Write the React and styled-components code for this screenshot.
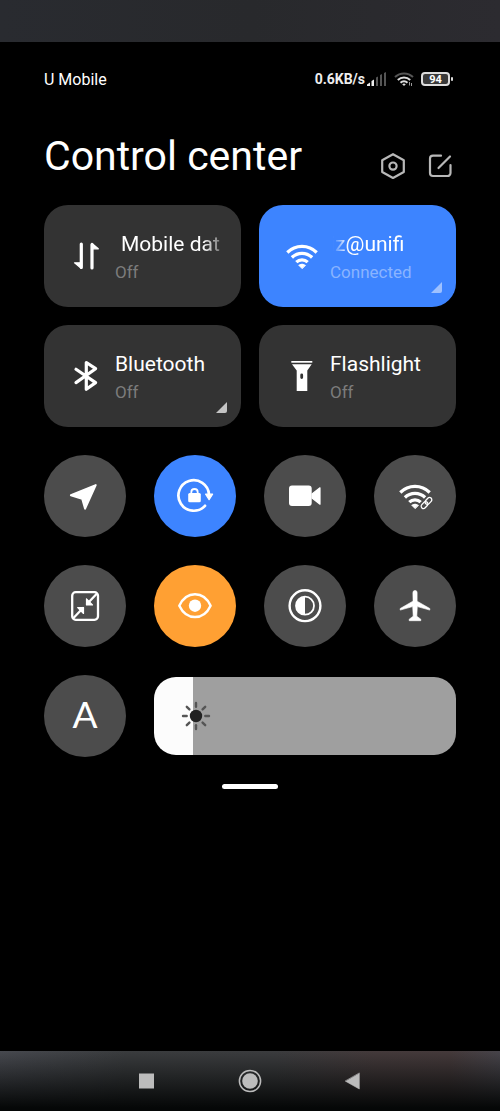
import React, { useState } from "react";
import styled, { createGlobalStyle } from "styled-components";

const GlobalStyle = createGlobalStyle`
  * {
    box-sizing: border-box;
  }
  body {
    margin: 0;
    background: #000;
    color: #fff;
    font-family: Roboto, "Liberation Sans", sans-serif;
  }
  button {
    margin: 0;
    padding: 0;
    border: none;
    background: none;
    color: inherit;
    font: inherit;
    cursor: pointer;
  }
`;

const Screen = styled.div`
  display: flex;
  flex-direction: column;
  min-height: 100vh;
`;

const TopStrip = styled.div`
  height: 42px;
  background: linear-gradient(90deg, #292b30, #28292c 50%, #2c2b30);
`;

const Panel = styled.main`
  flex: 1;
  display: flex;
  flex-direction: column;
  padding: 26px 44px 40px;
`;

const StatusBar = styled.div`
  display: flex;
  align-items: center;
  justify-content: space-between;
  height: 22px;
  font-size: 16px;
`;

const StatusIcons = styled.div`
  display: flex;
  align-items: center;
  gap: 7px;
  padding-right: 3px;
`;

const Speed = styled.span`
  display: flex;
  align-items: center;
  gap: 2px;
  font-size: 14px;
  font-weight: 700;
  color: #eee;
`;

const Battery = styled.div`
  display: flex;
  align-items: center;
  gap: 1px;
  &::after {
    content: "";
    width: 2px;
    height: 4px;
    background: #ddd;
    border-radius: 1px;
  }
`;

const BatteryLevel = styled.span`
  width: 29px;
  height: 14px;
  border: 2px solid #ddd;
  border-radius: 4px;
  background: #3a3a3a;
  font-size: 11px;
  font-weight: 700;
  line-height: 11px;
  text-align: center;
`;

const Header = styled.header`
  display: flex;
  align-items: flex-end;
  justify-content: space-between;
  margin: 41px 0 24px;
`;

const Title = styled.h1`
  margin: 0;
  font-size: 41px;
  font-weight: 400;
  line-height: 50px;
`;

const HeaderActions = styled.div`
  display: flex;
  gap: 18px;
`;

const IconButton = styled.button`
  width: 30px;
  height: 30px;
  color: #b8b8b8;
  svg {
    display: block;
  }
`;

const TileGrid = styled.div`
  display: grid;
  grid-template-columns: 1fr 1fr;
  gap: 18px;
`;

const Tile = styled.button`
  position: relative;
  display: flex;
  align-items: center;
  gap: 8px;
  min-width: 0;
  height: 102px;
  padding: 0 20px 0 23px;
  border-radius: 24px;
  background: ${(props) => (props.$active ? "#3d84ff" : "#333")};
  text-align: left;
  svg {
    flex-shrink: 0;
  }
`;

const TileText = styled.span`
  flex: 1;
  min-width: 0;
  padding-top: 4px;
`;

const fades = {
  right: "linear-gradient(90deg, #000 88px, transparent 114px)",
  left: "linear-gradient(90deg, transparent 3px, #000 18px)",
};

const TileName = styled.span`
  display: block;
  padding-left: ${(props) => (props.$fade === "right" ? "6px" : "0")};
  font-size: 21px;
  line-height: 28px;
  white-space: nowrap;
  mask-image: ${(props) => fades[props.$fade] || "none"};
`;

const TileState = styled.span`
  display: block;
  font-size: 17px;
  line-height: 28px;
  color: ${(props) => (props.$active ? "#8ab4ff" : "#7c7c7c")};
`;

const Corner = styled.span`
  position: absolute;
  right: 14px;
  bottom: 14px;
  width: 11px;
  height: 11px;
  border-bottom-right-radius: 2px;
  background: ${(props) => (props.$active ? "#9ec1ff" : "#c4c4c4")};
  clip-path: polygon(100% 0, 100% 100%, 0 100%);
`;

const ToggleGrid = styled.div`
  display: grid;
  grid-template-columns: repeat(4, 82px);
  justify-content: space-between;
  gap: 28px 0;
  margin: 28px 0;
`;

const colors = { blue: "#3d84ff", orange: "#ffa033" };

const Toggle = styled.button`
  display: flex;
  flex-shrink: 0;
  align-items: center;
  justify-content: center;
  width: 82px;
  height: 82px;
  border-radius: 50%;
  background: ${(props) => colors[props.$color] || "#4c4c4c"};
`;

const AutoLetter = styled.span`
  padding-bottom: 4px;
  font-family: Lato, sans-serif;
  font-size: 37px;
  line-height: 40px;
`;

const BrightnessRow = styled.div`
  display: flex;
  align-items: center;
  gap: 28px;
`;

const Brightness = styled.label`
  position: relative;
  flex: 1;
  display: flex;
  height: 78px;
  svg {
    position: absolute;
    top: 19px;
    left: 22px;
    pointer-events: none;
  }
`;

const Range = styled.input`
  appearance: none;
  width: 100%;
  height: 100%;
  margin: 0;
  border-radius: 22px;
  background: linear-gradient(90deg, #fcfcfc var(--level), #9f9f9f var(--level));
  cursor: pointer;
  &::-webkit-slider-thumb {
    appearance: none;
    width: 2px;
    height: 78px;
    background: transparent;
  }
`;

const Handle = styled.button`
  align-self: center;
  width: 56px;
  height: 5px;
  margin-top: 27px;
  border-radius: 3px;
  background: #fff;
`;

const NavBar = styled.nav`
  display: flex;
  align-items: center;
  justify-content: center;
  gap: 63px;
  height: 60px;
  background: linear-gradient(180deg, transparent, #050707 95%),
    linear-gradient(90deg, #47494f, #3a3c3e 25%, #3b3c3e 55%, #443a3b 75%, #453a3b 90%, #47444a);
`;

const NavButton = styled.button`
  width: 40px;
  height: 40px;
  color: #bcbcbc;
`;

function Icon({ size = 40, children }) {
  return (
    <svg
      width={size}
      height={size}
      viewBox={`0 0 ${size} ${size}`}
      fill="none"
      stroke="currentColor"
      strokeLinecap="round"
      strokeLinejoin="round"
      aria-hidden="true"
    >
      {children}
    </svg>
  );
}

const DataIcon = () => (
  <Icon>
    <path d="M14.3 8v23.5M25 8.500v23.500" strokeWidth="3.200" />
    <path d="M14.500 32.500 7.500 26.800h7zM24.800 7.300l6.500 5.500h-6.500z" fill="currentColor" strokeWidth="1.200" />
  </Icon>
);

const WifiArcs = () => (
  <>
    <path d="M5.300 16.500a20.800 20.800 0 0 1 29.400 0M9.900 21.500a14.300 14.300 0 0 1 20.200 0M14.300 26.200a8.100 8.100 0 0 1 11.400 0" strokeWidth="3.200" strokeLinecap="butt" />
    <path d="M20 32.500l-3.300-3.300q3.300-2.300 6.600 0z" fill="currentColor" strokeWidth="0.800" />
  </>
);

const WifiIcon = () => (
  <Icon>
    <WifiArcs />
  </Icon>
);

const BluetoothIcon = () => (
  <Icon>
    <path d="M9 13.300 28.600 26.600 19.300 33.200V6.500l9.300 6.200L9 26.600" strokeWidth="3.200" />
  </Icon>
);

const FlashlightIcon = () => (
  <Icon>
    <path d="M9.300 5h21v1.700h-21z" fill="currentColor" stroke="none" />
    <path
      d="M10 8.300h19.700L25.300 14.500V35H14.700V14.500zM19.700 17.500a1.400 1.400 0 0 0-1.400 1.400v2.700a1.400 1.400 0 0 0 2.800 0v-2.700a1.400 1.400 0 0 0-1.400-1.400z"
      fill="currentColor"
      fillRule="evenodd"
      stroke="none"
    />
  </Icon>
);

const LocationIcon = () => (
  <Icon>
    <path d="M30.700 9.100 20.100 32.600 17.200 22.700 5.900 19.200z" fill="currentColor" strokeWidth="2" />
  </Icon>
);

const RotationLockIcon = () => (
  <Icon>
    <path d="M34 18.500A15.300 15.300 0 1 0 30 29.800" strokeWidth="2.700" />
    <path d="M30.600 18.200h7l-3.500 5.500z" fill="currentColor" strokeWidth="1.200" />
    <rect x="13.200" y="17" width="12.600" height="9.300" rx="1.500" fill="currentColor" stroke="none" />
    <path d="M16.300 17.500v-1.300a3.200 3.200 0 0 1 6.400 0v1.300" strokeWidth="1.800" />
  </Icon>
);

const VideoIcon = () => (
  <Icon>
    <rect x="4" y="9.500" width="22.700" height="20.500" rx="3" fill="currentColor" stroke="none" />
    <path d="M27 18 35 11.800v16.400L27 22z" fill="currentColor" strokeWidth="1.200" />
  </Icon>
);

const WifiLinkIcon = () => (
  <Icon>
    <WifiArcs />
    <g transform="translate(31.500 27) rotate(-47)">
      <rect x="-8.500" y="-4" width="17" height="8" rx="4" fill="#4c4c4c" stroke="none" />
      <rect x="-6.700" y="-2.300" width="7.700" height="4.600" rx="2.300" strokeWidth="1.300" />
      <rect x="-1" y="-2.300" width="7.700" height="4.600" rx="2.300" strokeWidth="1.300" />
    </g>
  </Icon>
);

const FloatingWindowIcon = () => (
  <Icon>
    <rect x="7.200" y="6.200" width="25.800" height="27.600" rx="3.500" strokeWidth="2.300" />
    <path d="M31.500 8 22 18M8.500 32l9.500-10" strokeWidth="2.300" />
    <path d="M21.500 12.800v6.100h6zM18.500 21.500v6l-5.800-6z" fill="currentColor" strokeWidth="1.200" />
  </Icon>
);

const EyeIcon = () => (
  <Icon>
    <path d="M4.300 19.700C8 12 13.500 8.300 20 8.300S32 12 35.600 19.700C32 27.400 26.500 31 20 31S8 27.400 4.300 19.700z" strokeWidth="2.500" />
    <circle cx="20" cy="19.700" r="6.200" fill="currentColor" stroke="none" />
  </Icon>
);

const ContrastIcon = () => (
  <Icon>
    <circle cx="20" cy="19.700" r="15.400" strokeWidth="2.400" />
    <circle cx="20" cy="19.700" r="9" strokeWidth="1.800" />
    <path d="M20 10.700a9 9 0 0 0 0 18z" fill="currentColor" stroke="none" />
  </Icon>
);

const PlaneIcon = () => (
  <Icon>
    <path
      d="M17.900 6.500a2.100 2.100 0 0 1 4.200 0v8.700l12.700 7.300v1.600l-12.500-3.500-.500 9.600 4 3v1.500H14.200v-1.500l4-3-.500-9.600-12.500 3.500v-1.600l12.700-7.300z"
      fill="currentColor"
      strokeWidth="0.600"
    />
  </Icon>
);

const SunIcon = () => (
  <Icon>
    <circle cx="20" cy="20" r="6.200" fill="#222" stroke="none" />
    {[0, 45, 90, 135, 180, 225, 270, 315].map((angle) => (
      <path key={angle} d="M20 10.700V7" stroke="#555" strokeWidth="2.400" transform={`rotate(${angle} 20 20)`} />
    ))}
  </Icon>
);

const SignalIcon = () => (
  <svg width="20" height="14" viewBox="0 0 20 14" aria-hidden="true">
    <path d="M0 14v-1.500l3-2V14zM4.500 14V9L7 7.500V14z" fill="#eee" />
    <path d="M9 14V5.500L11 4.500V14zM13 14V3l2-1v12zM17 14V1l2-1v14z" fill="#555" />
  </svg>
);

const SmallWifiIcon = () => (
  <svg width="20" height="14" viewBox="0 0 20 14" fill="none" strokeWidth="2" aria-hidden="true">
    <path d="M1 5a13 13 0 0 1 18 0" stroke="#555" />
    <path d="M3.800 8a9 9 0 0 1 12.400 0M6.500 10.800a5 5 0 0 1 7 0" stroke="#ddd" />
    <path d="M10 14l-1.800-1.800q1.800-1.400 3.600 0z" fill="#ddd" />
    <path d="M15.500 10v3.500M17.500 11v3" stroke="#999" strokeWidth="1" />
  </svg>
);

const tiles = [
  { name: "Mobile dat", state: "Off", icon: DataIcon, fade: "right" },
  { name: "iz@unifi", state: "Connected", icon: WifiIcon, fade: "left", active: true, corner: true },
  { name: "Bluetooth", state: "Off", icon: BluetoothIcon, corner: true },
  { name: "Flashlight", state: "Off", icon: FlashlightIcon },
];

const toggles = [
  { label: "Location", icon: LocationIcon },
  { label: "Lock orientation", icon: RotationLockIcon, color: "blue" },
  { label: "Screen recorder", icon: VideoIcon },
  { label: "Hotspot", icon: WifiLinkIcon },
  { label: "Floating windows", icon: FloatingWindowIcon },
  { label: "Reading mode", icon: EyeIcon, color: "orange" },
  { label: "Dark mode", icon: ContrastIcon },
  { label: "Airplane mode", icon: PlaneIcon },
];

function App() {
  const [brightness, setBrightness] = useState(13);

  return (
    <Screen>
      <GlobalStyle />
      <TopStrip />
      <Panel>
        <StatusBar>
          <span>U Mobile</span>
          <StatusIcons>
            <Speed>
              0.6KB/s
              <SignalIcon />
            </Speed>
            <SmallWifiIcon />
            <Battery>
              <BatteryLevel>94</BatteryLevel>
            </Battery>
          </StatusIcons>
        </StatusBar>

        <Header>
          <Title>Control center</Title>
          <HeaderActions>
            <IconButton aria-label="Settings">
              <Icon size={30}>
                <path d="M15 3.200 25.800 9.200v11.800L15 27 4.200 21V9.200z" strokeWidth="2.200" />
                <circle cx="15" cy="15.100" r="3.600" strokeWidth="2.200" />
              </Icon>
            </IconButton>
            <IconButton aria-label="Edit">
              <Icon size={30}>
                <path d="M15 4.700H7a3 3 0 0 0-3 3V22a3 3 0 0 0 3 3h14.500a3 3 0 0 0 3-3v-8M12.500 17 24 5.500" strokeWidth="2.200" />
              </Icon>
            </IconButton>
          </HeaderActions>
        </Header>

        <TileGrid>
          {tiles.map(({ name, state, icon: TileIcon, fade, active, corner }) => (
            <Tile key={name} $active={active}>
              <TileIcon />
              <TileText>
                <TileName $fade={fade}>{name}</TileName>
                <TileState $active={active}>{state}</TileState>
              </TileText>
              {corner && <Corner $active={active} />}
            </Tile>
          ))}
        </TileGrid>

        <ToggleGrid>
          {toggles.map(({ label, icon: ToggleIcon, color }) => (
            <Toggle key={label} $color={color} aria-label={label}>
              <ToggleIcon />
            </Toggle>
          ))}
        </ToggleGrid>

        <BrightnessRow>
          <Toggle aria-label="Auto brightness">
            <AutoLetter>A</AutoLetter>
          </Toggle>
          <Brightness>
            <Range
              type="range"
              min="0"
              max="100"
              aria-label="Brightness"
              value={brightness}
              onChange={(e) => setBrightness(Number(e.target.value))}
              style={{ "--level": `${brightness}%` }}
            />
            <SunIcon />
          </Brightness>
        </BrightnessRow>

        <Handle aria-label="Collapse" />
      </Panel>

      <NavBar>
        <NavButton aria-label="Recent apps">
          <Icon>
            <rect x="12" y="12.500" width="15" height="15" fill="currentColor" stroke="none" />
          </Icon>
        </NavButton>
        <NavButton aria-label="Home">
          <Icon>
            <circle cx="20" cy="20" r="10.600" strokeWidth="1.500" />
            <circle cx="20" cy="20" r="7.800" fill="currentColor" stroke="none" />
          </Icon>
        </NavButton>
        <NavButton aria-label="Back">
          <Icon>
            <path d="M26.300 12.300v15.700L12.500 20.200z" fill="currentColor" strokeWidth="0.600" />
          </Icon>
        </NavButton>
      </NavBar>
    </Screen>
  );
}

export default App;
